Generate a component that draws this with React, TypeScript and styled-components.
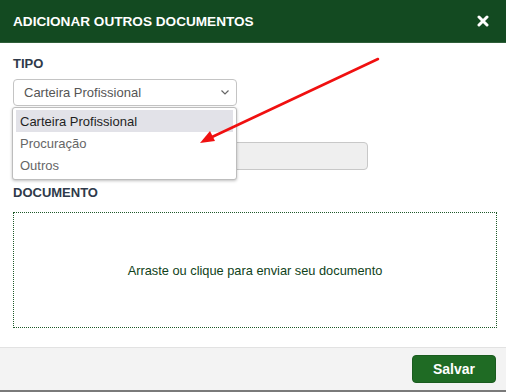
import React from "react";
import styled, { createGlobalStyle } from "styled-components";

const Global = createGlobalStyle`
  html, body { margin: 0; padding: 0; background: #fff; }
  body { font-family: "Liberation Sans", Arial, sans-serif; }
  * { box-sizing: border-box; }
`;

const Modal = styled.div`
  position: relative;
  width: 506px;
  height: 392px;
  display: flex;
  flex-direction: column;
  background: #fff;
  overflow: hidden;
`;

const Header = styled.div`
  height: 43px;
  flex: none;
  display: flex;
  align-items: center;
  justify-content: space-between;
  padding: 0 17px 0 13px;
  background: #134a21;
  border-bottom: 1px solid #2e5e39;
`;

const Title = styled.h1`
  margin: 0;
  color: #fff;
  font-size: 13.6px;
  font-weight: 700;
`;

const Close = styled.button`
  border: none;
  background: none;
  padding: 0;
  width: 12px;
  height: 12px;
  display: flex;
  cursor: pointer;
`;

const Body = styled.div`
  flex: 1;
  display: flex;
  flex-direction: column;
  padding: 13px 10px 0 13px;
`;

const Label = styled.label`
  display: block;
  font-size: 13px;
  line-height: 15px;
  font-weight: 700;
  color: #2f3a4a;
  margin-bottom: 8px;
`;

const SelectWrap = styled.div`
  position: relative;
  width: 224px;
`;

const SelectBox = styled.div`
  height: 27px;
  border: 1px solid #c4c4c4;
  border-radius: 4px;
  display: flex;
  align-items: center;
  justify-content: space-between;
  padding: 0 7px 0 10px;
  font-size: 13px;
  color: #555;
  background: #fff;
`;

const Menu = styled.ul`
  position: absolute;
  left: -1px;
  top: 28px;
  width: 225px;
  margin: 0;
  padding: 2px 3px 3px 3px;
  list-style: none;
  background: #fff;
  border: 1px solid #bdbdbd;
  border-radius: 3px;
  box-shadow: 0 1px 3px rgba(0, 0, 0, 0.25);
  z-index: 2;
`;

const Option = styled.li<{ $active?: boolean }>`
  height: 22px;
  display: flex;
  align-items: center;
  padding-left: 4px;
  font-size: 13px;
  color: ${(p) => (p.$active ? "#1f1f1f" : "#666")};
  background: ${(p) => (p.$active ? "#e2e2e8" : "transparent")};
`;

const HiddenLabel = styled.div`
  height: 16px;
  margin-top: 20px;
`;

const GrayInput = styled.div`
  width: 355px;
  height: 28px;
  background: #efefef;
  border: 1px solid #c8c8c8;
  border-radius: 4px;
`;

const Section = styled.div`
  margin-top: 15px;
`;

const Drop = styled.div`
  height: 116px;
  width: 484px;
  border: 1px dotted #1e5a2a;
  display: flex;
  align-items: center;
  justify-content: center;
  font-size: 12.8px;
  color: #0f4219;
  margin-top: 12px;
`;

const Footer = styled.div`
  height: 45px;
  flex: none;
  background: #f3f3f3;
  border-top: 1px solid #e2e2e2;
  border-bottom: 2px solid #7a7a7a;
  display: flex;
  align-items: center;
  justify-content: flex-end;
  padding: 0 10px 0 0;
`;

const SaveButton = styled.button`
  width: 84px;
  height: 28px;
  border: 1px solid #1a5c1f;
  border-radius: 4px;
  background: #1f6b24;
  color: #fff;
  font-family: "Liberation Sans", Arial, sans-serif;
  font-size: 14px;
  font-weight: 700;
  cursor: pointer;
`;

const ArrowOverlay = styled.svg`
  position: absolute;
  left: 0;
  top: 0;
  pointer-events: none;
  z-index: 3;
`;

export default function App() {
  return (
    <>
      <Global />
      <Modal>
        <Header>
          <Title>ADICIONAR OUTROS DOCUMENTOS</Title>
          <Close aria-label="Fechar">
            <svg width="12" height="12" viewBox="0 0 12 12">
              <path d="M2 2 L10 10 M10 2 L2 10" stroke="#fff" strokeWidth="3" strokeLinecap="round" />
            </svg>
          </Close>
        </Header>
        <Body>
          <Label>TIPO</Label>
          <SelectWrap>
            <SelectBox>
              <span>Carteira Profissional</span>
              <svg width="8" height="5" viewBox="0 0 8 5">
                <path d="M0.5 0.5 L4 4 L7.5 0.5" stroke="#666" strokeWidth="1.2" fill="none" />
              </svg>
            </SelectBox>
            <Menu>
              <Option $active>Carteira Profissional</Option>
              <Option>Procuração</Option>
              <Option>Outros</Option>
            </Menu>
          </SelectWrap>
          <HiddenLabel />
          <GrayInput />
          <Section>
            <Label>DOCUMENTO</Label>
            <Drop>Arraste ou clique para enviar seu documento</Drop>
          </Section>
        </Body>
        <Footer>
          <SaveButton>Salvar</SaveButton>
        </Footer>
        <ArrowOverlay width="506" height="392" viewBox="0 0 506 392">
          <line x1="378" y1="59" x2="212" y2="137" stroke="#f01010" strokeWidth="2.5" strokeLinecap="round" />
          <polygon points="200,143 210,131 215,141" fill="#f01010" />
        </ArrowOverlay>
      </Modal>
    </>
  );
}
